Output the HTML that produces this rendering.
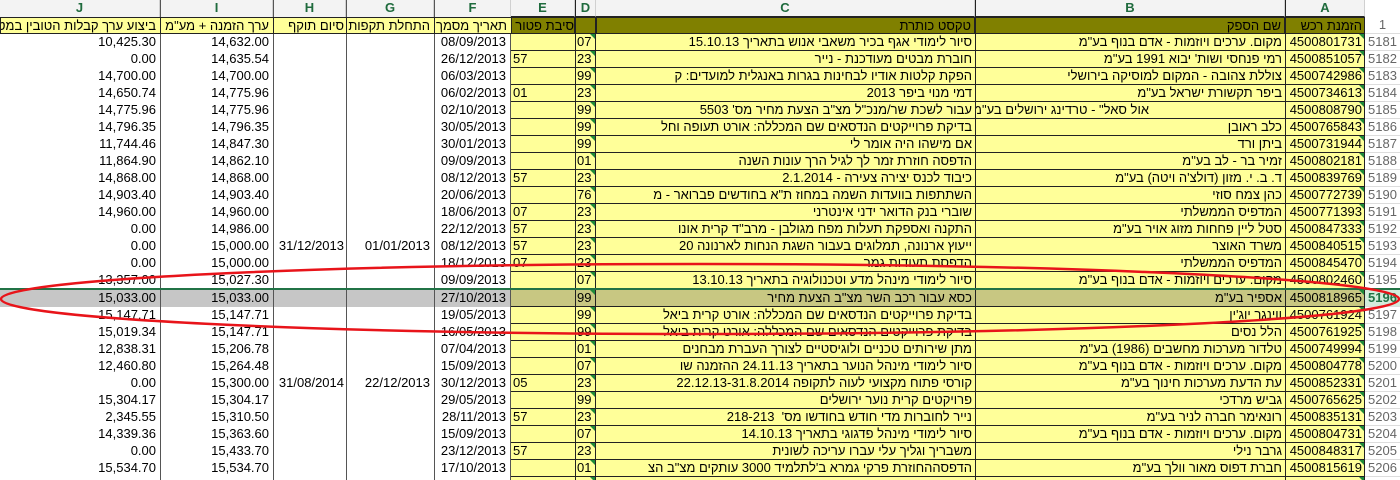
<!DOCTYPE html>
<html style="width:1400px;height:480px;overflow:hidden"><head><meta charset="utf-8"><style>
*{box-sizing:border-box;margin:0;padding:0}
body{width:1400px;height:480px;overflow:hidden;background:#fff;font-family:"Liberation Sans","DejaVu Sans",sans-serif;font-size:13px;color:#000;position:relative}
.r{position:absolute;left:0;width:1400px;height:17px;display:flex}
.r>div{height:17px;line-height:16px;white-space:nowrap;overflow:visible;position:relative}
.j{width:160px;text-align:right;padding-right:4px}
.i{width:113px;text-align:right;padding-right:4px;border-left:1px solid #555}
.h{width:73px;text-align:right;padding-right:2px;border-left:1px solid #555}
.g{width:88px;text-align:right;padding-right:4px;border-left:1px solid #555}
.f{width:77px;text-align:right;padding-right:4px;border-left:1px solid #555;border-right:1px solid #555}
.e{width:64px;padding-left:2px;background:#ffff99;border-bottom:1px solid #222}
.d{width:21px;padding-left:1px;background:#ffff99;border:1px solid #222;border-top:none}
.c{width:379px;text-align:right;padding-right:3px;background:#ffff99;border-bottom:1px solid #222;direction:rtl}
.b{width:310px;text-align:right;padding-right:3px;background:#ffff99;border-left:1px solid #222;border-bottom:1px solid #222;direction:rtl}
.a{width:80px;text-align:right;padding-right:2px;background:#ffff99;border-left:1px solid #222;border-right:1px solid #222;border-bottom:1px solid #222}
.n{width:35px;text-align:center;color:#666;background:#fff;border-bottom:1px solid #ddd}
.d::after,.a::after{content:"";position:absolute;right:0;top:0;border-top:5px solid #1e8a3a;border-left:5px solid transparent}
.hd{top:0;background:#f3f3f3;border-bottom:1px solid #bbb}
.hd>div{text-align:center;color:#1f6b3d;font-weight:bold;border-right:1px solid #d0d0d0;background:#f3f3f3;padding:0}
.hd>div::after{display:none}
.hd .n{background:#fff}
.h1{top:17px}
.h1 .j,.h1 .i,.h1 .h,.h1 .g,.h1 .f{background:#ffff99;border:1px solid #222;border-right:none;direction:rtl;text-align:right}
.h1 .e,.h1 .d,.h1 .c,.h1 .b,.h1 .a{background:#808000;border:1px solid #222;direction:rtl;text-align:right}
.h1 .d::after,.h1 .a::after{display:none}
.sel>.j,.sel>.i,.sel>.h,.sel>.g,.sel>.f{background:#c6c6c6}
.sel>.e,.sel>.d,.sel>.c,.sel>.b,.sel>.a{background:#c8c782}
.sel{border-top:2px solid #217346;border-bottom:2px solid #217346}
.sel>.n{color:#217346;font-weight:bold;background:#d3ecdc}
</style></head><body>
<div class="r hd"><div class="j">J</div><div class="i">I</div><div class="h">H</div><div class="g">G</div><div class="f">F</div><div class="e">E</div><div class="d">D</div><div class="c" style="text-align:center">C</div><div class="b" style="text-align:center">B</div><div class="a">A</div><div class="n" style="border:none;color:#888;font-weight:normal"></div></div>
<div class="r h1"><div class="j" style="overflow:hidden">ביצוע ערך קבלות הטובין במטבע</div><div class="i">ערך הזמנה + מע"מ</div><div class="h">סיום תוקף</div><div class="g">התחלת תקפות</div><div class="f">תאריך מסמך</div><div class="e">סיבת פטור</div><div class="d"></div><div class="c">טקסט כותרת</div><div class="b">שם הספק</div><div class="a">הזמנת רכש</div><div class="n">1</div></div>

<div class="r" style="top:34px"><div class="j">10,425.30</div><div class="i">14,632.00</div><div class="h"></div><div class="g"></div><div class="f">08/09/2013</div><div class="e"></div><div class="d">07</div><div class="c">סיור לימודי אגף בכיר משאבי אנוש בתאריך 15.10.13</div><div class="b">מקום. ערכים ויוזמות - אדם בנוף בע"מ</div><div class="a">4500801731</div><div class="n">5181</div></div>
<div class="r" style="top:51px"><div class="j">0.00</div><div class="i">14,635.54</div><div class="h"></div><div class="g"></div><div class="f">26/12/2013</div><div class="e">57</div><div class="d">23</div><div class="c">חוברת מבטים מעודכנת - נייר</div><div class="b">רמי פנחסי ושות' יבוא 1991 בע"מ</div><div class="a">4500851057</div><div class="n">5182</div></div>
<div class="r" style="top:68px"><div class="j">14,700.00</div><div class="i">14,700.00</div><div class="h"></div><div class="g"></div><div class="f">06/03/2013</div><div class="e"></div><div class="d">99</div><div class="c">הפקת קלטות אודיו לבחינות בגרות באנגלית למועדים: ק</div><div class="b">צוללת צהובה - המקום למוסיקה בירושלי</div><div class="a">4500742986</div><div class="n">5183</div></div>
<div class="r" style="top:85px"><div class="j">14,650.74</div><div class="i">14,775.96</div><div class="h"></div><div class="g"></div><div class="f">06/02/2013</div><div class="e">01</div><div class="d">23</div><div class="c">דמי מנוי ביפר 2013</div><div class="b">ביפר תקשורת ישראל בע"מ</div><div class="a">4500734613</div><div class="n">5184</div></div>
<div class="r" style="top:102px"><div class="j">14,775.96</div><div class="i">14,775.96</div><div class="h"></div><div class="g"></div><div class="f">02/10/2013</div><div class="e"></div><div class="d">99</div><div class="c">עבור לשכת שר/מנכ"ל מצ"ב הצעת מחיר מס' 5503</div><div class="b" style="padding-right:136px;overflow:hidden">אול סאל" - טרדינג ירושלים בע"מ"</div><div class="a">4500808790</div><div class="n">5185</div></div>
<div class="r" style="top:119px"><div class="j">14,796.35</div><div class="i">14,796.35</div><div class="h"></div><div class="g"></div><div class="f">30/05/2013</div><div class="e"></div><div class="d">99</div><div class="c">בדיקת פרוייקטים הנדסאים שם המכללה: אורט תעופה וחל</div><div class="b">כלב ראובן</div><div class="a">4500765843</div><div class="n">5186</div></div>
<div class="r" style="top:136px"><div class="j">11,744.46</div><div class="i">14,847.30</div><div class="h"></div><div class="g"></div><div class="f">30/01/2013</div><div class="e"></div><div class="d">99</div><div class="c">אם מישהו היה אומר לי</div><div class="b">ביתן ורד</div><div class="a">4500731944</div><div class="n">5187</div></div>
<div class="r" style="top:153px"><div class="j">11,864.90</div><div class="i">14,862.10</div><div class="h"></div><div class="g"></div><div class="f">09/09/2013</div><div class="e"></div><div class="d">01</div><div class="c">הדפסה חוזרת זמר לך לגיל הרך עונות השנה</div><div class="b">זמיר בר - לב בע"מ</div><div class="a">4500802181</div><div class="n">5188</div></div>
<div class="r" style="top:170px"><div class="j">14,868.00</div><div class="i">14,868.00</div><div class="h"></div><div class="g"></div><div class="f">08/12/2013</div><div class="e">57</div><div class="d">23</div><div class="c">כיבוד לכנס יצירה צעירה - 2.1.2014</div><div class="b">ד. ב. י. מזון (דולצ'ה ויטה) בע"מ</div><div class="a">4500839769</div><div class="n">5189</div></div>
<div class="r" style="top:187px"><div class="j">14,903.40</div><div class="i">14,903.40</div><div class="h"></div><div class="g"></div><div class="f">20/06/2013</div><div class="e"></div><div class="d">76</div><div class="c">השתתפות בוועדות השמה במחוז ת"א בחודשים פברואר - מ</div><div class="b">כהן צמח סוזי</div><div class="a">4500772739</div><div class="n">5190</div></div>
<div class="r" style="top:204px"><div class="j">14,960.00</div><div class="i">14,960.00</div><div class="h"></div><div class="g"></div><div class="f">18/06/2013</div><div class="e">07</div><div class="d">23</div><div class="c">שוברי בנק הדואר ידני אינטרני</div><div class="b">המדפיס הממשלתי</div><div class="a">4500771393</div><div class="n">5191</div></div>
<div class="r" style="top:221px"><div class="j">0.00</div><div class="i">14,986.00</div><div class="h"></div><div class="g"></div><div class="f">22/12/2013</div><div class="e">57</div><div class="d">23</div><div class="c">התקנה ואספקת תעלות מפח מגולבן - מרב"ד קרית אונו</div><div class="b">סטל ליין פחחות מזוג אויר בע"מ</div><div class="a">4500847333</div><div class="n">5192</div></div>
<div class="r" style="top:238px"><div class="j">0.00</div><div class="i">15,000.00</div><div class="h">31/12/2013</div><div class="g">01/01/2013</div><div class="f">08/12/2013</div><div class="e">57</div><div class="d">23</div><div class="c">ייעוץ ארנונה, תמלוגים בעבור השגת הנחות לארנונה 20</div><div class="b">משרד האוצר</div><div class="a">4500840515</div><div class="n">5193</div></div>
<div class="r" style="top:255px"><div class="j">0.00</div><div class="i">15,000.00</div><div class="h"></div><div class="g"></div><div class="f">18/12/2013</div><div class="e">07</div><div class="d">23</div><div class="c">הדפסת תעודות גמר</div><div class="b">המדפיס הממשלתי</div><div class="a">4500845470</div><div class="n">5194</div></div>
<div class="r" style="top:272px"><div class="j">13,357.00</div><div class="i">15,027.30</div><div class="h"></div><div class="g"></div><div class="f">09/09/2013</div><div class="e"></div><div class="d">07</div><div class="c">סיור לימודי מינהל מדע וטכנולוגיה בתאריך 13.10.13</div><div class="b">מקום. ערכים ויוזמות - אדם בנוף בע"מ</div><div class="a">4500802460</div><div class="n">5195</div></div>
<div class="r sel" style="top:288px;height:19px"><div class="j">15,033.00</div><div class="i">15,033.00</div><div class="h"></div><div class="g"></div><div class="f">27/10/2013</div><div class="e"></div><div class="d">99</div><div class="c">כסא עבור רכב השר מצ"ב הצעת מחיר</div><div class="b">אספיר בע"מ</div><div class="a">4500818965</div><div class="n">5196</div></div>
<div class="r" style="top:307px"><div class="j">15,147.71</div><div class="i">15,147.71</div><div class="h"></div><div class="g"></div><div class="f">19/05/2013</div><div class="e"></div><div class="d">99</div><div class="c">בדיקת פרוייקטים הנדסאים שם המכללה: אורט קרית ביאל</div><div class="b">ווינגר יוג'ין</div><div class="a">4500761924</div><div class="n">5197</div></div>
<div class="r" style="top:324px"><div class="j">15,019.34</div><div class="i">15,147.71</div><div class="h"></div><div class="g"></div><div class="f">16/05/2013</div><div class="e"></div><div class="d">99</div><div class="c">בדיקת פרוייקטים הנדסאים שם המכללה: אורט קרית ביאל</div><div class="b">הלל נסים</div><div class="a">4500761925</div><div class="n">5198</div></div>
<div class="r" style="top:341px"><div class="j">12,838.31</div><div class="i">15,206.78</div><div class="h"></div><div class="g"></div><div class="f">07/04/2013</div><div class="e"></div><div class="d">01</div><div class="c">מתן שירותים טכניים ולוגיסטיים לצורך העברת מבחנים</div><div class="b">טלדור מערכות מחשבים (1986) בע"מ</div><div class="a">4500749994</div><div class="n">5199</div></div>
<div class="r" style="top:358px"><div class="j">12,460.80</div><div class="i">15,264.48</div><div class="h"></div><div class="g"></div><div class="f">15/09/2013</div><div class="e"></div><div class="d">07</div><div class="c">סיור לימודי מינהל הנוער בתאריך 24.11.13 ההזמנה שו</div><div class="b">מקום. ערכים ויוזמות - אדם בנוף בע"מ</div><div class="a">4500804778</div><div class="n">5200</div></div>
<div class="r" style="top:375px"><div class="j">0.00</div><div class="i">15,300.00</div><div class="h">31/08/2014</div><div class="g">22/12/2013</div><div class="f">30/12/2013</div><div class="e">05</div><div class="d">23</div><div class="c">קורסי פתוח מקצועי לעוה לתקופה 22.12.13-31.8.2014</div><div class="b">עת הדעת מערכות חינוך בע"מ</div><div class="a">4500852331</div><div class="n">5201</div></div>
<div class="r" style="top:392px"><div class="j">15,304.17</div><div class="i">15,304.17</div><div class="h"></div><div class="g"></div><div class="f">29/05/2013</div><div class="e"></div><div class="d">99</div><div class="c">פרויקטים קרית נוער ירושלים</div><div class="b">גביש מרדכי</div><div class="a">4500765625</div><div class="n">5202</div></div>
<div class="r" style="top:409px"><div class="j">2,345.55</div><div class="i">15,310.50</div><div class="h"></div><div class="g"></div><div class="f">28/11/2013</div><div class="e">57</div><div class="d">23</div><div class="c">נייר לחוברות מדי חודש בחודשו מס' &nbsp;<span dir="ltr">218-213</span></div><div class="b">רונאימר חברה לניר בע"מ</div><div class="a">4500835131</div><div class="n">5203</div></div>
<div class="r" style="top:426px"><div class="j">14,339.36</div><div class="i">15,363.60</div><div class="h"></div><div class="g"></div><div class="f">15/09/2013</div><div class="e"></div><div class="d">07</div><div class="c">סיור לימודי מינהל פדגוגי בתאריך 14.10.13</div><div class="b">מקום. ערכים ויוזמות - אדם בנוף בע"מ</div><div class="a">4500804731</div><div class="n">5204</div></div>
<div class="r" style="top:443px"><div class="j">0.00</div><div class="i">15,433.70</div><div class="h"></div><div class="g"></div><div class="f">23/12/2013</div><div class="e">57</div><div class="d">23</div><div class="c">משבריך וגליך עלי עברו עריכה לשונית</div><div class="b">גרבר נילי</div><div class="a">4500848317</div><div class="n">5205</div></div>
<div class="r" style="top:460px"><div class="j">15,534.70</div><div class="i">15,534.70</div><div class="h"></div><div class="g"></div><div class="f">17/10/2013</div><div class="e"></div><div class="d">01</div><div class="c">הדפסההחוזרת פרקי גמרא ב'לתלמיד 3000 עותקים מצ"ב הצ</div><div class="b">חברת דפוס מאור וולך בע"מ</div><div class="a">4500815619</div><div class="n">5206</div></div>
<div class="r" style="top:477px;height:3px;overflow:hidden"><div class="j"></div><div class="i"></div><div class="h"></div><div class="g"></div><div class="f"></div><div class="e"></div><div class="d"></div><div class="c"></div><div class="b"></div><div class="a"></div><div class="n"></div></div>

<svg style="position:absolute;left:0;top:0" width="1400" height="480"><ellipse cx="700" cy="299" rx="699" ry="35" fill="none" stroke="#e8141a" stroke-width="2.5"/></svg>
</body></html>
